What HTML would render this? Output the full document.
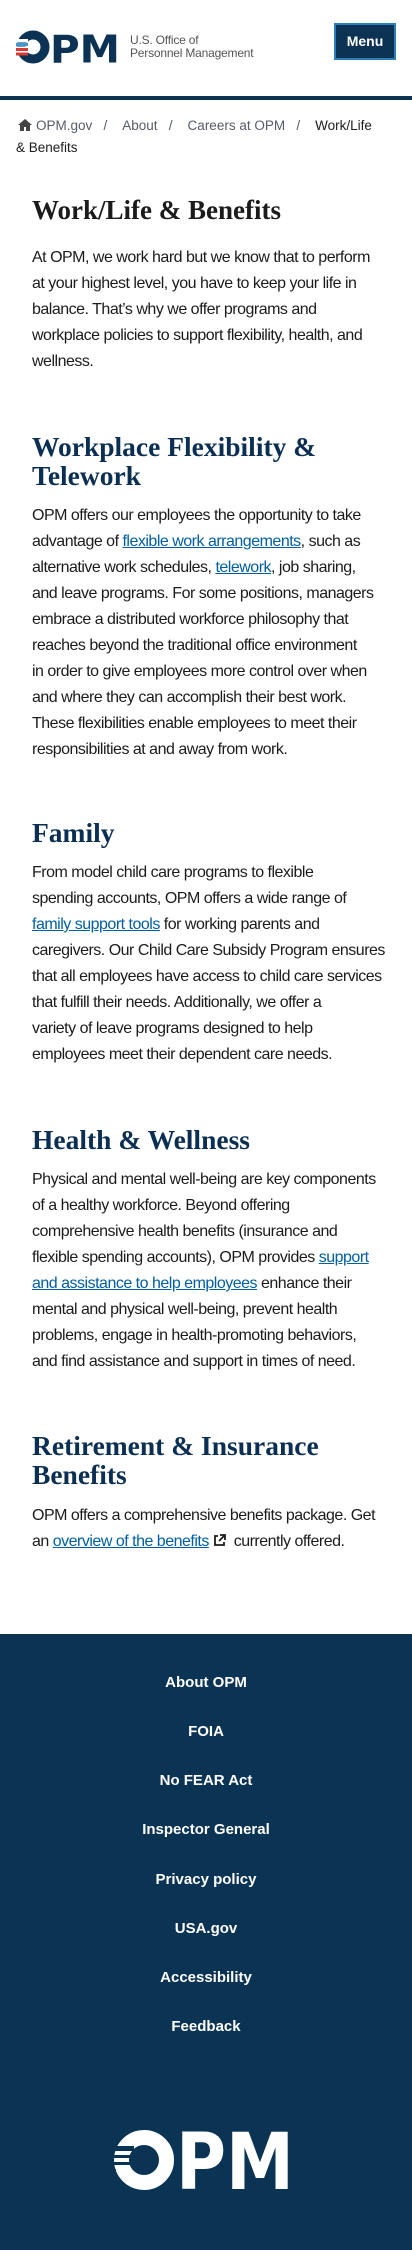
<!DOCTYPE html>
<html><head><meta charset="utf-8">
<style>
*{margin:0;padding:0;box-sizing:border-box}
body{width:412px;height:2250px;position:relative;background:#fff;font-family:"Liberation Sans",sans-serif;color:#1b1b1b;overflow:hidden}
.a{position:absolute}
.p{position:absolute;left:32px;font-size:16px;line-height:26px;letter-spacing:-0.5px;white-space:nowrap}
.p a{color:#005ea2;text-decoration:underline}
h1,h2{position:absolute;left:32px;font-family:"Liberation Serif",serif;font-weight:bold;white-space:nowrap}
h1{font-size:27px;line-height:32px;color:#1b1b1b}
h2{font-size:27.5px;line-height:29px;color:#0b2f52}
.bc{position:absolute;font-size:13.5px;color:#565c65;white-space:nowrap}
footer{position:absolute;left:0;top:1634px;width:412px;height:616px;background:#0b3354}
.fl{position:absolute;left:0;width:412px;text-align:center;color:#fff;font-weight:bold;font-size:15px;line-height:20px}
</style></head><body>

<svg class="a" style="left:14px;top:28px" width="110" height="38" viewBox="0 0 110 38">
  <circle cx="19" cy="19" r="12" fill="none" stroke="#0c3354" stroke-width="9"/>
  <rect x="0" y="11" width="14" height="3.5" fill="#fff"/>
  <rect x="2" y="15" width="12" height="3" fill="#3d9ad1"/>
  <rect x="0" y="18.5" width="14" height="1.5" fill="#fff"/>
  <rect x="2" y="20" width="12" height="3" fill="#d83933"/>
  <rect x="0" y="23" width="14" height="1.5" fill="#fff"/>
  <rect x="2" y="24.5" width="12" height="3" fill="#d83933"/>
  <text x="36" y="34.5" font-family="DejaVu Sans" font-weight="bold" font-size="38" fill="#0c3354" textLength="70" lengthAdjust="spacingAndGlyphs">PM</text>
</svg>
<div class="a" style="left:130px;top:34px;font-size:12px;line-height:13px;color:#555;letter-spacing:-0.2px">U.S. Office of<br>Personnel Management</div>
<div class="a" style="left:334px;top:23px;width:62px;height:37px;background:#0c3354;border:2px solid #2a7fb8;color:#fff;font-weight:bold;font-size:14px;line-height:33px;text-align:center">Menu</div>
<div class="a" style="left:0;top:96px;width:412px;height:4px;background:#0c3354"></div>

<svg class="a" style="left:18px;top:119px" width="14" height="12" viewBox="0 0 14 12"><path d="M7 0L0 6h2v6h4V8h2v4h4V6h2z" fill="#444"/></svg>
<div class="bc" style="left:36px;top:118px">OPM.gov&nbsp;&nbsp;&nbsp;/&nbsp;&nbsp;&nbsp;&nbsp;About&nbsp;&nbsp;&nbsp;/&nbsp;&nbsp;&nbsp;&nbsp;Careers at OPM&nbsp;&nbsp;&nbsp;/&nbsp;&nbsp;&nbsp;&nbsp;<span style="color:#1b1b1b">Work/Life</span></div>
<div class="bc" style="left:16px;top:140px;color:#1b1b1b">&amp; Benefits</div>

<h1 style="top:194px">Work/Life &amp; Benefits</h1>
<div class="p" style="top:245px">At OPM, we work hard but we know that to perform<br>at your highest level, you have to keep your life in<br>balance. That’s why we offer programs and<br>workplace policies to support flexibility, health, and<br>wellness.</div>

<h2 style="top:432px">Workplace Flexibility &amp;<br>Telework</h2>
<div class="p" style="top:503px">OPM offers our employees the opportunity to take<br>advantage of <a>flexible work arrangements</a>, such as<br>alternative work schedules, <a>telework</a>, job sharing,<br>and leave programs. For some positions, managers<br>embrace a distributed workforce philosophy that<br>reaches beyond the traditional office environment<br>in order to give employees more control over when<br>and where they can accomplish their best work.<br>These flexibilities enable employees to meet their<br>responsibilities at and away from work.</div>

<h2 style="top:818px">Family</h2>
<div class="p" style="top:860px">From model child care programs to flexible<br>spending accounts, OPM offers a wide range of<br><a>family support tools</a> for working parents and<br>caregivers. Our Child Care Subsidy Program ensures<br>that all employees have access to child care services<br>that fulfill their needs. Additionally, we offer a<br>variety of leave programs designed to help<br>employees meet their dependent care needs.</div>

<h2 style="top:1125px">Health &amp; Wellness</h2>
<div class="p" style="top:1167px">Physical and mental well-being are key components<br>of a healthy workforce. Beyond offering<br>comprehensive health benefits (insurance and<br>flexible spending accounts), OPM provides <a>support</a><br><a>and assistance to help employees</a> enhance their<br>mental and physical well-being, prevent health<br>problems, engage in health-promoting behaviors,<br>and find assistance and support in times of need.</div>

<h2 style="top:1431px">Retirement &amp; Insurance<br>Benefits</h2>
<div class="p" style="top:1503px">OPM offers a comprehensive benefits package. Get<br>an <a>overview of the benefits</a> <svg width="13" height="13" viewBox="0 0 13 13" style="vertical-align:-1px"><path d="M5 2H2v9h9V8" fill="none" stroke="#1b1b1b" stroke-width="1.8"/><path d="M7 1h5v5M12 1L6 7" fill="none" stroke="#1b1b1b" stroke-width="1.8"/></svg>&nbsp; currently offered.</div>

<footer>
  <div class="fl" style="top:39px">About OPM</div>
  <div class="fl" style="top:88px">FOIA</div>
  <div class="fl" style="top:137px">No FEAR Act</div>
  <div class="fl" style="top:186px">Inspector General</div>
  <div class="fl" style="top:236px">Privacy policy</div>
  <div class="fl" style="top:285px">USA.gov</div>
  <div class="fl" style="top:334px">Accessibility</div>
  <div class="fl" style="top:383px">Feedback</div>
  <svg class="a" style="left:112px;top:495px" width="182" height="62" viewBox="0 0 182 62">
    <circle cx="32" cy="31" r="22.5" fill="none" stroke="#fff" stroke-width="15"/>
    <rect x="0" y="17" width="22" height="5" fill="#0b3354"/>
    <rect x="0" y="26" width="22" height="3" fill="#0b3354"/>
    <rect x="0" y="33" width="22" height="3" fill="#0b3354"/>
    <rect x="0" y="40" width="4" height="3" fill="#0b3354"/>
    <text x="64" y="60" font-family="DejaVu Sans" font-weight="bold" font-size="78" fill="#fff" textLength="118" lengthAdjust="spacingAndGlyphs">PM</text>
  </svg>
</footer>
</body></html>
